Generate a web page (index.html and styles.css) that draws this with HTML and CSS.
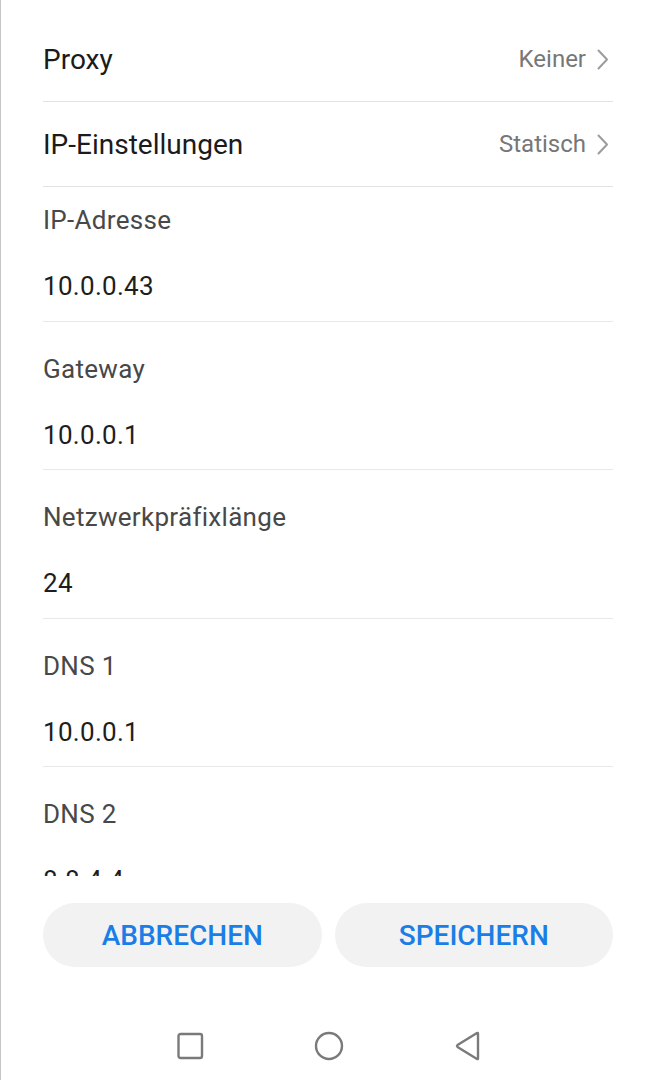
FILE: index.html
```html
<!DOCTYPE html>
<html lang="de">
<head>
    <meta charset="UTF-8">
    <meta name="viewport" content="width=device-width, initial-scale=1.0">
    <title>IP-Einstellungen</title>
    <link rel="stylesheet" href="styles.css">
</head>
<body>
    <div class="screen">
        <div class="scroll">
            <div class="row">
                <span class="row-title">Proxy</span>
                <span class="row-value">Keiner
                    <svg class="chevron" width="12" height="21" viewBox="0 0 12 21"><path d="M1.5 1.5 L10 10.5 L1.5 19.5" fill="none" stroke="#9c9c9c" stroke-width="2" stroke-linecap="round" stroke-linejoin="round"/></svg>
                </span>
            </div>
            <div class="row">
                <span class="row-title">IP-Einstellungen</span>
                <span class="row-value">Statisch
                    <svg class="chevron" width="12" height="21" viewBox="0 0 12 21"><path d="M1.5 1.5 L10 10.5 L1.5 19.5" fill="none" stroke="#9c9c9c" stroke-width="2" stroke-linecap="round" stroke-linejoin="round"/></svg>
                </span>
            </div>

            <!-- Felder -->
            <div class="field first">
                <div class="field-label">IP-Adresse</div>
                <div class="field-value">10.0.0.43</div>
            </div>
            <div class="field">
                <div class="field-label">Gateway</div>
                <div class="field-value">10.0.0.1</div>
            </div>
            <div class="field">
                <div class="field-label">Netzwerkpräfixlänge</div>
                <div class="field-value">24</div>
            </div>
            <div class="field">
                <div class="field-label">DNS 1</div>
                <div class="field-value">10.0.0.1</div>
            </div>
            <div class="field">
                <div class="field-label">DNS 2</div>
                <div class="field-value">8.8.4.4</div>
            </div>
        </div>

        <div class="actions">
            <button type="button" class="btn">ABBRECHEN</button>
            <button type="button" class="btn">SPEICHERN</button>
        </div>

        <nav class="navbar">
            <div class="nav-item">
                <svg width="28" height="28" viewBox="0 0 28 28"><rect x="2.5" y="2" width="23.5" height="24" rx="2" fill="none" stroke="#7a7a7a" stroke-width="2.4"/></svg>
            </div>
            <div class="nav-item">
                <svg width="30" height="30" viewBox="0 0 30 30"><circle cx="15" cy="15" r="13" fill="none" stroke="#7a7a7a" stroke-width="2.4"/></svg>
            </div>
            <div class="nav-item">
                <svg width="28" height="30" viewBox="0 0 28 30"><path d="M24 2.5 L24 27.5 Q24 28.5 23 28 L3.5 16 Q2.5 15 3.5 14 L23 2 Q24 1.5 24 2.5 Z" fill="none" stroke="#7a7a7a" stroke-width="2.4" stroke-linejoin="round"/></svg>
            </div>
        </nav>
    </div>
</body>
</html>
```

FILE: styles.css
```css
body {
    margin: 0;
    background: #fff;
    font-family: Roboto, "Liberation Sans", sans-serif;
}
.screen {
    width: 656px;
    height: 1080px;
    box-sizing: border-box;
    border-left: 1px solid #c6c6c6;
    background: #fff;
    overflow: hidden;
}
.scroll {
    height: 876px;
    overflow: hidden;
    padding: 17px 43px 0 42px;
    box-sizing: border-box;
}
.row {
    height: 84px;
    display: flex;
    align-items: center;
    justify-content: space-between;
    border-bottom: 1px solid #e3e3e3;
}
.row-title {
    font-size: 28px;
    color: #1b1b1b;
}
.row-value {
    display: flex;
    align-items: center;
    gap: 11px;
    font-size: 24px;
    color: #777;
    padding-right: 4px;
}
.chevron {
    display: block;
}
.field {
    padding: 31px 0 17.6px;
    border-bottom: 1px solid #e8e8e8;
}
.field.first {
    padding-top: 17px;
}
.field-label {
    font-size: 26px;
    line-height: 33px;
    letter-spacing: 0.3px;
    color: #484848;
}
.field-value {
    margin-top: 33px;
    font-size: 26px;
    line-height: 33px;
    letter-spacing: 0.3px;
    color: #1e1e1e;
}
.actions {
    display: flex;
    gap: 13px;
    padding: 27px 43px 0 42px;
}
.btn {
    flex: 1;
    height: 64px;
    border: none;
    border-radius: 32px;
    background: #f2f2f2;
    color: #1a7ee6;
    font-family: Roboto, "Liberation Sans", sans-serif;
    font-size: 28px;
    font-weight: 500;
    cursor: pointer;
}
.navbar {
    margin-top: 45px;
    height: 68px;
    display: flex;
    justify-content: center;
    align-items: center;
}
.nav-item {
    width: 139px;
    display: flex;
    justify-content: center;
    align-items: center;
}
.nav-item svg {
    display: block;
}
```
